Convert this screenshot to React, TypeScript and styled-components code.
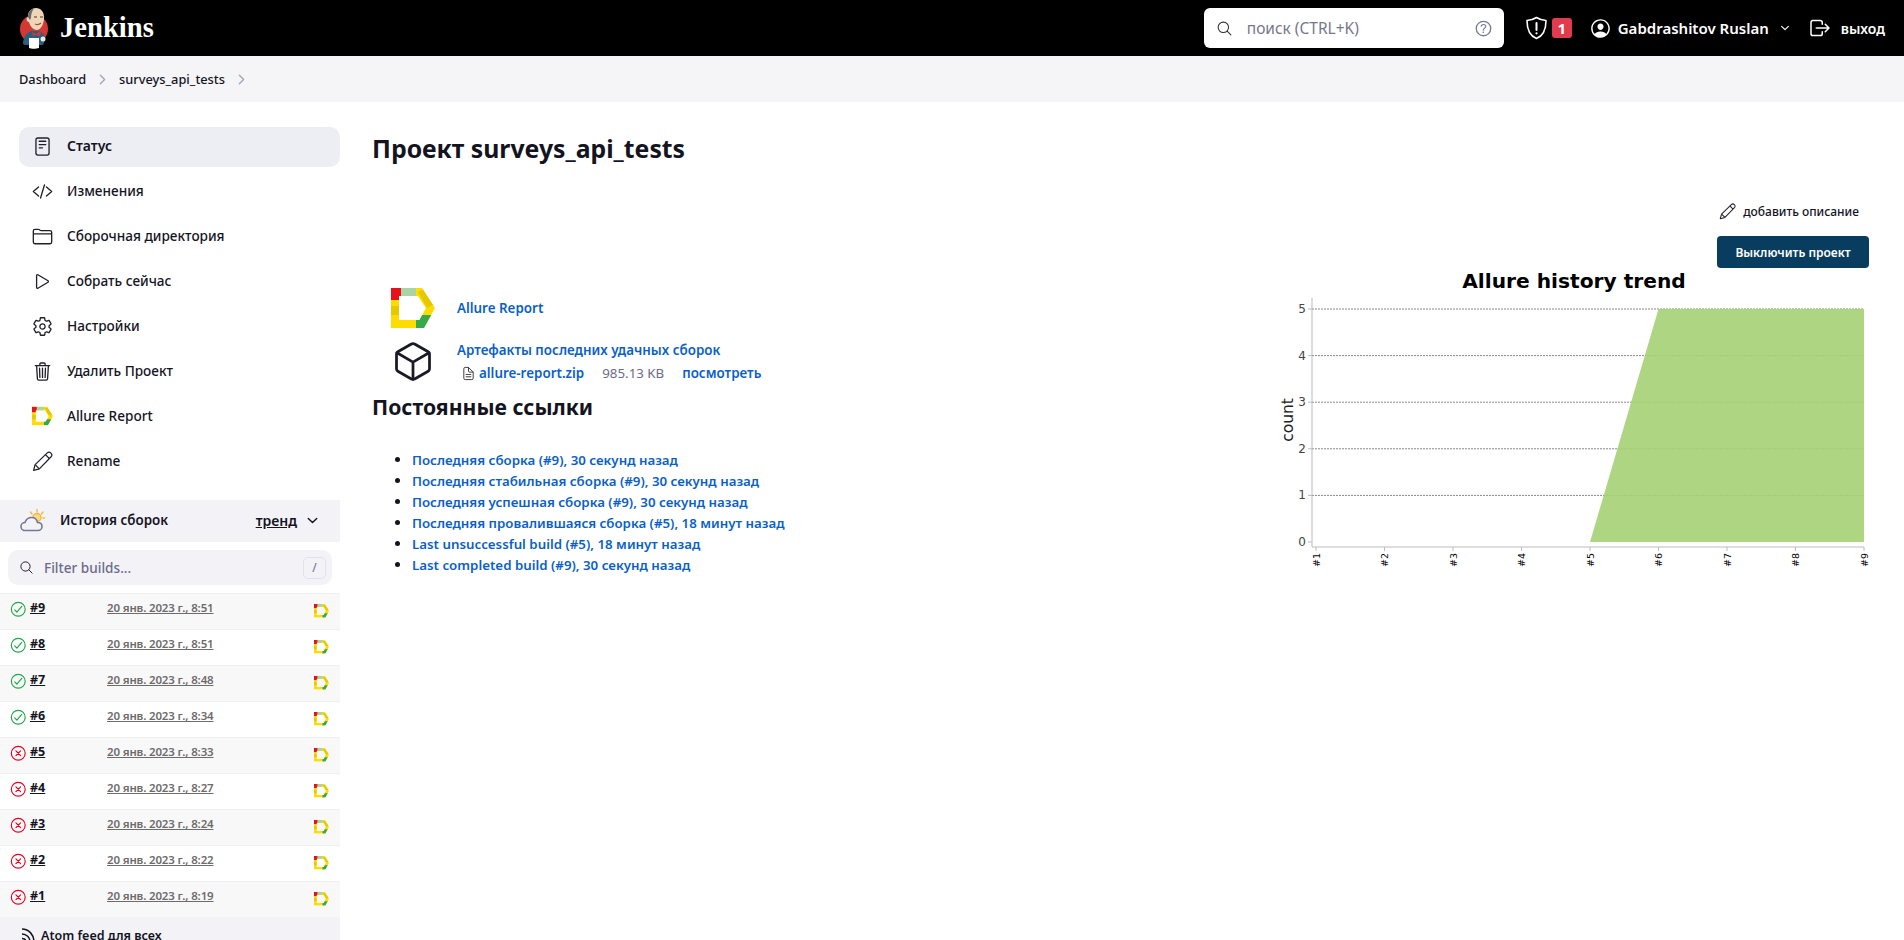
import React from 'react';
import styled, { createGlobalStyle } from 'styled-components';
import {
  IoReaderOutline,
  IoCodeSlashOutline,
  IoFolderOutline,
  IoPlayOutline,
  IoSettingsOutline,
  IoTrashOutline,
  IoSearchOutline,
  IoHelpCircleOutline,
  IoChevronDownOutline,
  IoChevronForwardOutline,
  IoCheckmarkCircleOutline,
  IoCloseCircleOutline,
  IoPersonCircleOutline,
  IoLogOutOutline,
  IoCubeOutline,
  IoDocumentTextOutline,
} from 'react-icons/io5';

const GlobalStyle = createGlobalStyle`
  html, body {
    margin: 0;
    padding: 0;
    height: 940px;
    overflow: hidden;
    background: #fff;
    color: #14141f;
    font-family: "Noto Sans", "Open Sans", sans-serif;
    font-size: 14px;
  }
  * { box-sizing: border-box; }
`;

const Page = styled.div`
  height: 940px;
  overflow: hidden;
  display: flex;
  flex-direction: column;
`;

const Header = styled.header`
  height: 56px;
  flex: none;
  background: #000;
  color: #fff;
  display: flex;
  align-items: center;
  padding: 0 19px;
`;

const Brand = styled.div`
  display: flex;
  align-items: center;
  gap: 11px;
  flex: 1;
  font-family: "Liberation Serif", serif;
  font-size: 28.6px;
  font-weight: 700;
`;

const SearchBox = styled.div`
  width: 300px;
  height: 40px;
  background: #fff;
  border-radius: 6px;
  display: flex;
  align-items: center;
  padding: 0 10px 0 12px;
  color: #333;
  font-size: 17px;
`;

const SearchInput = styled.input`
  flex: 1;
  min-width: 0;
  border: 0;
  outline: 0;
  margin-left: 12px;
  font: inherit;
  font-size: 15.5px;
  &::placeholder { color: #77778a; opacity: 1; }
`;

const HelpIcon = styled(IoHelpCircleOutline)`
  color: #77779a;
  font-size: 21px;
`;

const HeaderAction = styled.div<{ $gap?: number; $size?: number }>`
  display: flex;
  align-items: center;
  gap: ${(p) => p.$gap ?? 6}px;
  font-size: ${(p) => p.$size ?? 15}px;
  font-weight: 600;
`;

const HeaderActions = styled.div`
  display: flex;
  align-items: center;
  margin-left: 21px;
  gap: 17px;
`;

const Badge = styled.span`
  width: 20px;
  height: 20px;
  background: #e33b4e;
  border-radius: 3px;
  display: flex;
  align-items: center;
  justify-content: center;
  font-size: 15px;
  font-weight: 700;
`;

const UserCaret = styled(IoChevronDownOutline)`
  font-size: 12px;
  margin-left: 4px;
`;

const Breadcrumbs = styled.nav`
  height: 46px;
  flex: none;
  background: #f5f5f8;
  display: flex;
  align-items: center;
  padding-left: 19px;
  font-size: 12.8px;
  font-weight: 500;
`;

const Crumb = styled.span`
  color: #14141f;
`;

const CrumbSep = styled(IoChevronForwardOutline)`
  color: #a5a5ba;
  font-size: 15px;
  margin: 0 9px;
`;

const Body = styled.div`
  flex: 1;
  min-height: 0;
  display: flex;
`;

const Sidebar = styled.aside`
  width: 340px;
  flex: none;
  padding-top: 25px;
`;

const TaskList = styled.div`
  display: flex;
  flex-direction: column;
  gap: 5px;
  padding-left: 19px;
`;

const Task = styled.a<{ $active?: boolean }>`
  height: 40px;
  border-radius: 10px;
  display: flex;
  align-items: center;
  gap: 14px;
  padding: 0 0 2px 13px;
  background: ${(p) => (p.$active ? '#edeef4' : 'transparent')};
  color: #14141f;
  font-size: ${(p) => (p.$active ? 14 : 13.6)}px;
  font-weight: ${(p) => (p.$active ? 600 : 500)};
`;

const TaskIcon = styled.span`
  width: 21px;
  height: 21px;
  display: flex;
  align-items: center;
  justify-content: center;
  font-size: 23px;
  color: #20202c;
`;

const TaskLabel = styled.span`
  padding-bottom: 2px;
`;

const HistoryHeader = styled.div`
  margin-top: 18px;
  height: 42px;
  background: #f2f2f7;
  display: flex;
  align-items: center;
  padding: 0 20px 2px 20px;
  font-size: 14px;
  font-weight: 600;
`;

const HistoryTitle = styled.span`
  margin-left: 15px;
  flex: 1;
  font-size: 13.4px;
`;

const TrendLink = styled.span`
  text-decoration: underline;
  margin-right: 8px;
`;

const FilterBox = styled.div`
  margin: 8px 8px;
  height: 35px;
  background: #f2f2f7;
  border-radius: 10px;
  display: flex;
  align-items: center;
  padding: 0 6px 0 11px;
  font-size: 15px;
`;

const FilterInput = styled.input`
  flex: 1;
  min-width: 0;
  margin-left: 8px;
  border: 0;
  outline: 0;
  background: transparent;
  font: inherit;
  font-size: 13.6px;
  font-weight: 500;
  &::placeholder { color: #6d6b8a; opacity: 1; }
`;

const Kbd = styled.span`
  width: 23px;
  height: 22px;
  border: 1px solid #e2e2ea;
  border-radius: 5px;
  display: flex;
  align-items: center;
  justify-content: center;
  font-size: 12px;
  color: #6d6b8a;
`;

const BuildRow = styled.div<{ $odd: boolean }>`
  height: 36px;
  display: grid;
  grid-template-columns: 19px 77px 1fr 26px;
  padding-left: 11px;
  background: ${(p) => (p.$odd ? '#f8f8f8' : '#fff')};
  border-top: 1px solid #f0f0f0;
`;

const StatusIcon = styled.span<{ $ok: boolean }>`
  height: 30px;
  display: flex;
  align-items: center;
  font-size: 18.5px;
  color: ${(p) => (p.$ok ? '#1ea64b' : '#e6001f')};
  margin-left: -2px;
`;

const BuildNumber = styled.a`
  line-height: 27px;
  font-size: 12.5px;
  font-weight: 700;
  text-decoration: underline;
  color: #14141f;
`;

const BuildDate = styled.a`
  line-height: 27px;
  font-size: 11.5px;
  letter-spacing: -0.15px;
  font-weight: 600;
  text-decoration: underline;
  color: #6d6b6b;
`;

const BuildReport = styled.span`
  padding-top: 9px;
`;

const FeedFooter = styled.div`
  height: 60px;
  background: #f2f2f7;
  display: flex;
  align-items: flex-start;
  gap: 5px;
  padding: 10px 0 0 21px;
  font-size: 12.5px;
  font-weight: 600;
`;

const Main = styled.main`
  flex: 1;
  min-width: 0;
  padding: 26px 35px 0 32px;
`;

const Title = styled.h1`
  margin: 0;
  height: 42px;
  line-height: 40px;
  font-size: 24.8px;
  font-weight: 700;
`;

const DescriptionRow = styled.div`
  margin-top: 30px;
  height: 22px;
  display: flex;
  justify-content: flex-end;
  align-items: center;
  gap: 7px;
  padding-right: 10px;
  font-size: 12px;
  font-weight: 500;
`;

const ActionRow = styled.div`
  margin-top: 14px;
  display: flex;
  justify-content: flex-end;
`;

const DisableButton = styled.button`
  width: 152px;
  height: 32px;
  border: 0;
  border-radius: 4px;
  background: #083d60;
  color: #fff;
  font: inherit;
  font-size: 12px;
  font-weight: 600;
`;

const Content = styled.div`
  margin-top: 2px;
  display: flex;
  justify-content: space-between;
`;

const LeftColumn = styled.div`
  padding-top: 18px;
`;

const ArtifactList = styled.div`
  display: flex;
  flex-direction: column;
  gap: 11px;
  margin-bottom: 9px;
`;

const ArtifactRow = styled.div`
  display: flex;
  padding-left: 19px;
  gap: 22px;
  align-items: center;
`;

const ArtifactIcon = styled.span`
  width: 44px;
  height: 44px;
  display: flex;
  align-items: center;
  justify-content: center;
  font-size: 53px;
  color: #1a1a26;
`;

const BlueLink = styled.a<{ $size?: number }>`
  color: #0b5fc9;
  font-weight: 600;
  font-size: ${(p) => p.$size ?? 13.4}px;
`;

const FileRow = styled.div`
  display: flex;
  align-items: center;
  margin: 5px 0 0 4px;
`;

const FileIcon = styled(IoDocumentTextOutline)`
  font-size: 15px;
  margin-right: 3px;
  color: #333;
`;

const FileSize = styled.span`
  margin: 0 18px;
  color: #6d6b8a;
  font-size: 13.3px;
`;

const SectionTitle = styled.h2`
  margin: 0;
  font-size: 21.2px;
  line-height: 30px;
  font-weight: 700;
`;

const PermaList = styled.ul`
  margin: 27px 0 0;
  padding-left: 40px;
`;

const PermaItem = styled.li`
  height: 21px;
  line-height: 21px;
`;

const Chart = styled.svg`
  width: 589px;
  height: 330px;
  flex: none;
  display: block;
  overflow: visible;
  font-family: "DejaVu Sans", sans-serif;
`;

const PencilIcon = ({ size }: { size: number }) => (
  <svg width={size} height={size} viewBox="0 0 20 20" fill="none" stroke="#20202c" strokeWidth="1.2" strokeLinejoin="round">
    <path d="M1.5 18.5L3 13L14.5 1.8C15.5 0.9 17 1 18 2C19 3 19.1 4.5 18.2 5.5L7 17Z" />
    <path d="M3 13L7 17M12.8 3.5L16.5 7.2" />
  </svg>
);

const ALLURE_D = 'M0 0H31L44 20L33 40H0ZM8 8V32H28.5L35 20L27 8Z';

const AllureIcon = ({ size }: { size: number }) => (
  <svg width={size} height={(size * 40) / 44} viewBox="0 0 44 40">
    <clipPath id="allure-d">
      <path d={ALLURE_D} clipRule="evenodd" />
    </clipPath>
    <g clipPath="url(#allure-d)">
      <rect width="44" height="40" fill="#ffdc00" />
      <rect y="18" width="10" height="9" fill="#e6c800" />
      <rect x="10" width="15" height="10" fill="#a9d5a5" />
      <path d="M27 4L35 0L44 16L36 20Z" fill="#e6c800" />
      <path d="M25 32L31 27H44L38 40H25Z" fill="#36a94a" />
      <rect width="10" height="12" fill="#e8101a" />
    </g>
  </svg>
);

const JenkinsLogo = () => (
  <svg width="30" height="41" viewBox="0 0 30 41">
    <circle cx="15" cy="21" r="14" fill="#d33833" />
    <path d="M4 36C4 30 7 25 12 23L20 23C25 25 26 28 26 32L24 37H6Z" fill="#2c5f7e" />
    <path d="M9 8C9 3 13 0 17 0C22 0 25 4 25 9C25 15 23 21 18 22C14 22 11 18 10 14C7 14 7 9 9 9Z" fill="#f0d6b7" />
    <path d="M9 9C9 4 12 1 15 0.5C13 3 12 6 12 10L11 12Z" fill="#6b6b6b" />
    <path d="M15 9H18M21 9H24" stroke="#49372c" strokeWidth="1" />
    <path d="M16 16C18 17 20 17 22 15" stroke="#a0533f" strokeWidth="1.2" fill="none" />
    <path d="M13 24L17 26L22 23L21 28L17 27L14 28Z" fill="#d33833" />
    <path d="M10 30H20V40C17 41 12 41 10 40Z" fill="#fff" />
    <circle cx="24" cy="31" r="2.5" fill="#e8e8e8" />
  </svg>
);

const ShieldIcon = () => (
  <svg width="23" height="24" viewBox="0 0 23 24" fill="none" stroke="#fff" strokeWidth="1.6">
    <path d="M11.5 1.5C8.5 3.5 5 4.3 2 4.5C2 13 4 19.5 11.5 22.5C19 19.5 21 13 21 4.5C18 4.3 14.5 3.5 11.5 1.5Z" strokeLinejoin="round" />
    <path d="M11.5 7V14" strokeWidth="2" strokeLinecap="round" />
    <circle cx="11.5" cy="17.3" r="1.1" fill="#fff" stroke="none" />
  </svg>
);

const WeatherIcon = () => (
  <svg width="25" height="24" viewBox="0 0 25 24" fill="none">
    <g stroke="#f4b942" strokeWidth="1.4" strokeLinecap="round">
      <path d="M17 1.5V4M10.5 4L12 6M23 4L21.5 6M25 10H23" />
      <circle cx="17" cy="9.5" r="4" fill="#f8d88a" />
    </g>
    <path d="M5 22.5C2.5 22.5 1 20.5 1 18.5C1 16 3 14.5 5 14.5C6 11.5 8.5 9.5 11.5 9.5C15 9.5 17 12 17.5 14.5C20 14.5 22 16 22 18.5C22 21 20 22.5 18 22.5Z" fill="#f2f2f7" stroke="#77779a" strokeWidth="1.6" />
  </svg>
);

const RssIcon = () => (
  <svg width="15" height="22" viewBox="0 0 15 22" fill="none" stroke="#14141f" strokeWidth="1.5">
    <path d="M1 2C8 2 13 8 13 15" />
    <path d="M1 7C5.5 7 9 10.5 9 15" />
    <path d="M1 11.5C3.5 11.5 5 13 5 15" />
  </svg>
);

const TASKS = [
  { label: 'Статус', icon: <IoReaderOutline />, active: true },
  { label: 'Изменения', icon: <IoCodeSlashOutline /> },
  { label: 'Сборочная директория', icon: <IoFolderOutline /> },
  { label: 'Собрать сейчас', icon: <IoPlayOutline /> },
  { label: 'Настройки', icon: <IoSettingsOutline /> },
  { label: 'Удалить Проект', icon: <IoTrashOutline /> },
  { label: 'Allure Report', icon: <AllureIcon size={22} /> },
  { label: 'Rename', icon: <PencilIcon size={21} /> },
];

const BUILDS = [
  { n: 9, date: '20 янв. 2023 г., 8:51', ok: true },
  { n: 8, date: '20 янв. 2023 г., 8:51', ok: true },
  { n: 7, date: '20 янв. 2023 г., 8:48', ok: true },
  { n: 6, date: '20 янв. 2023 г., 8:34', ok: true },
  { n: 5, date: '20 янв. 2023 г., 8:33', ok: false },
  { n: 4, date: '20 янв. 2023 г., 8:27', ok: false },
  { n: 3, date: '20 янв. 2023 г., 8:24', ok: false },
  { n: 2, date: '20 янв. 2023 г., 8:22', ok: false },
  { n: 1, date: '20 янв. 2023 г., 8:19', ok: false },
];

const PERMALINKS = [
  'Последняя сборка (#9), 30 секунд назад',
  'Последняя стабильная сборка (#9), 30 секунд назад',
  'Последняя успешная сборка (#9), 30 секунд назад',
  'Последняя провалившаяся сборка (#5), 18 минут назад',
  'Last unsuccessful build (#5), 18 минут назад',
  'Last completed build (#9), 30 секунд назад',
];

// chart geometry, in the svg's own coordinates
const X0 = 36;
const XSTEP = 68.5;
const Y0 = 272;
const YSTEP = 46.6;

const TrendChart = () => (
  <Chart viewBox="0 0 589 330">
    <text x="294" y="18" textAnchor="middle" fontSize="20.2" fontWeight="700" fill="#000">
      Allure history trend
    </text>
    {[1, 2, 3, 4, 5].map((v) => (
      <line
        key={v}
        x1={X0 - 4}
        x2={X0 + 8 * XSTEP}
        y1={Y0 - v * YSTEP}
        y2={Y0 - v * YSTEP}
        stroke="#888"
        strokeWidth="1"
        strokeDasharray="2 1"
      />
    ))}
    <path
      d={`M${X0 + 4 * XSTEP} ${Y0}L${X0 + 5 * XSTEP} ${Y0 - 5 * YSTEP}H${X0 + 8 * XSTEP}V${Y0}Z`}
      fill="#a5d073"
      fillOpacity="0.9"
    />
    {[0, 1, 2, 3, 4, 5].map((v) => (
      <g key={v}>
        <line x1={X0 - 8} x2={X0 - 4} y1={Y0 - v * YSTEP} y2={Y0 - v * YSTEP} stroke="#bbb" />
        <text x={X0 - 10} y={Y0 - v * YSTEP + 4} textAnchor="end" fontSize="12" fill="#444">
          {v}
        </text>
      </g>
    ))}
    <path d={`M${X0 - 4} 28V${Y0 + 5}H${X0 + 8 * XSTEP}`} fill="none" stroke="#bbb" />
    {[1, 2, 3, 4, 5, 6, 7, 8, 9].map((n, i) => (
      <g key={n}>
        <line x1={X0 + i * XSTEP} x2={X0 + i * XSTEP} y1={Y0 + 5} y2={Y0 + 9} stroke="#bbb" />
        <text
          transform={`translate(${X0 + i * XSTEP + 3.5} ${Y0 + 11}) rotate(-90)`}
          textAnchor="end"
          fontSize="9.5"
          fill="#000"
        >
          #{n}
        </text>
      </g>
    ))}
    <text transform="translate(13 150) rotate(-90)" textAnchor="middle" fontSize="15.5" fill="#222">
      count
    </text>
  </Chart>
);

const App: React.FC = () => (
  <Page>
    <GlobalStyle />
    <Header>
      <Brand>
        <JenkinsLogo />
        Jenkins
      </Brand>
      <SearchBox>
        <IoSearchOutline />
        <SearchInput placeholder="поиск (CTRL+K)" />
        <HelpIcon />
      </SearchBox>
      <HeaderActions>
        <HeaderAction $gap={4}>
          <ShieldIcon />
          <Badge>1</Badge>
        </HeaderAction>
        <HeaderAction>
          <IoPersonCircleOutline size={23} />
          Gabdrashitov Ruslan
          <UserCaret />
        </HeaderAction>
        <HeaderAction $size={14} $gap={9}>
          <IoLogOutOutline size={24} />
          выход
        </HeaderAction>
      </HeaderActions>
    </Header>
    <Breadcrumbs>
      <Crumb>Dashboard</Crumb>
      <CrumbSep />
      <Crumb>surveys_api_tests</Crumb>
      <CrumbSep />
    </Breadcrumbs>
    <Body>
      <Sidebar>
        <TaskList>
          {TASKS.map((t) => (
            <Task key={t.label} $active={t.active}>
              <TaskIcon>{t.icon}</TaskIcon>
              <TaskLabel>{t.label}</TaskLabel>
            </Task>
          ))}
        </TaskList>
        <HistoryHeader>
          <WeatherIcon />
          <HistoryTitle>История сборок</HistoryTitle>
          <TrendLink>тренд</TrendLink>
          <IoChevronDownOutline size={15} />
        </HistoryHeader>
        <FilterBox>
          <IoSearchOutline />
          <FilterInput placeholder="Filter builds..." />
          <Kbd>/</Kbd>
        </FilterBox>
        {BUILDS.map((b, i) => (
          <BuildRow key={b.n} $odd={i % 2 === 0}>
            <StatusIcon $ok={b.ok}>
              {b.ok ? <IoCheckmarkCircleOutline /> : <IoCloseCircleOutline />}
            </StatusIcon>
            <BuildNumber>#{b.n}</BuildNumber>
            <BuildDate>{b.date}</BuildDate>
            <BuildReport>
              <AllureIcon size={15} />
            </BuildReport>
          </BuildRow>
        ))}
        <FeedFooter>
          <RssIcon />
          Atom feed для всех
        </FeedFooter>
      </Sidebar>
      <Main>
        <Title>Проект surveys_api_tests</Title>
        <DescriptionRow>
          <PencilIcon size={17} />
          добавить описание
        </DescriptionRow>
        <ActionRow>
          <DisableButton>Выключить проект</DisableButton>
        </ActionRow>
        <Content>
          <LeftColumn>
            <ArtifactList>
              <ArtifactRow>
                <AllureIcon size={44} />
                <BlueLink>Allure Report</BlueLink>
              </ArtifactRow>
              <ArtifactRow>
                <ArtifactIcon>
                  <IoCubeOutline />
                </ArtifactIcon>
                <div>
                  <BlueLink>Артефакты последних удачных сборок</BlueLink>
                  <FileRow>
                    <FileIcon />
                    <BlueLink>allure-report.zip</BlueLink>
                    <FileSize>985.13 KB</FileSize>
                    <BlueLink>посмотреть</BlueLink>
                  </FileRow>
                </div>
              </ArtifactRow>
            </ArtifactList>
            <SectionTitle>Постоянные ссылки</SectionTitle>
            <PermaList>
              {PERMALINKS.map((l) => (
                <PermaItem key={l}>
                  <BlueLink $size={13.3}>{l}</BlueLink>
                </PermaItem>
              ))}
            </PermaList>
          </LeftColumn>
          <TrendChart />
        </Content>
      </Main>
    </Body>
  </Page>
);

export default App;
